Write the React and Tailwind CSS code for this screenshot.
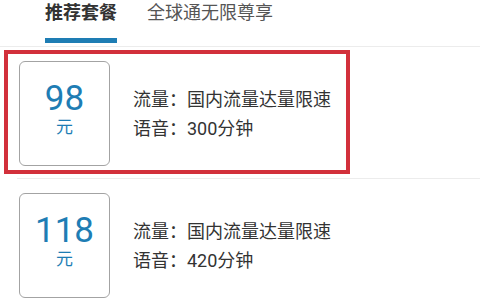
import React from "react";

const plans = [
  { price: "98", voice: "300" },
  { price: "118", voice: "420" },
];

export default function App() {
  return (
    <div
      className="relative w-[480px] h-[300px] overflow-hidden bg-white"
      style={{ fontFamily: '"Roboto", "Noto Sans CJK SC", sans-serif' }}
    >
      <div className="flex h-[46px] pl-[45px] gap-[30px]">
        <div className="flex flex-col items-stretch">
          <div className="text-[18px] leading-[25px] font-bold text-[#333]">推荐套餐</div>
          <div className="mt-[13px] h-[5px] bg-[#1e7db4]" />
        </div>
        <div className="text-[18px] leading-[25px] text-[#555]">全球通无限尊享</div>
      </div>
      <div className="h-px bg-[#ececec]" />
      {plans.map((p, i) => (
        <div key={i}>
          <div className="flex items-center pl-[19px] pt-[14px] pb-[12px]">
            <div className="w-[91px] h-[105px] rounded-[6px] border border-[#a3a3a3] flex flex-col items-center justify-center pb-[13px] text-[#1e7db4]">
              <div className="text-[35px] leading-[41px]">{p.price}</div>
              <div className="text-[17px] leading-[17px]">元</div>
            </div>
            <div className="ml-[23px] text-[18px] leading-[29px] text-[#333]">
              <div>流量：国内流量达量限速</div>
              <div>语音：{p.voice}分钟</div>
            </div>
          </div>
          <div className="h-px bg-[#ececec] ml-[17px]" />
        </div>
      ))}
      <div className="absolute left-[4px] top-[50px] w-[346px] h-[124px] border-[4px] border-[#d2303b]" />
    </div>
  );
}
